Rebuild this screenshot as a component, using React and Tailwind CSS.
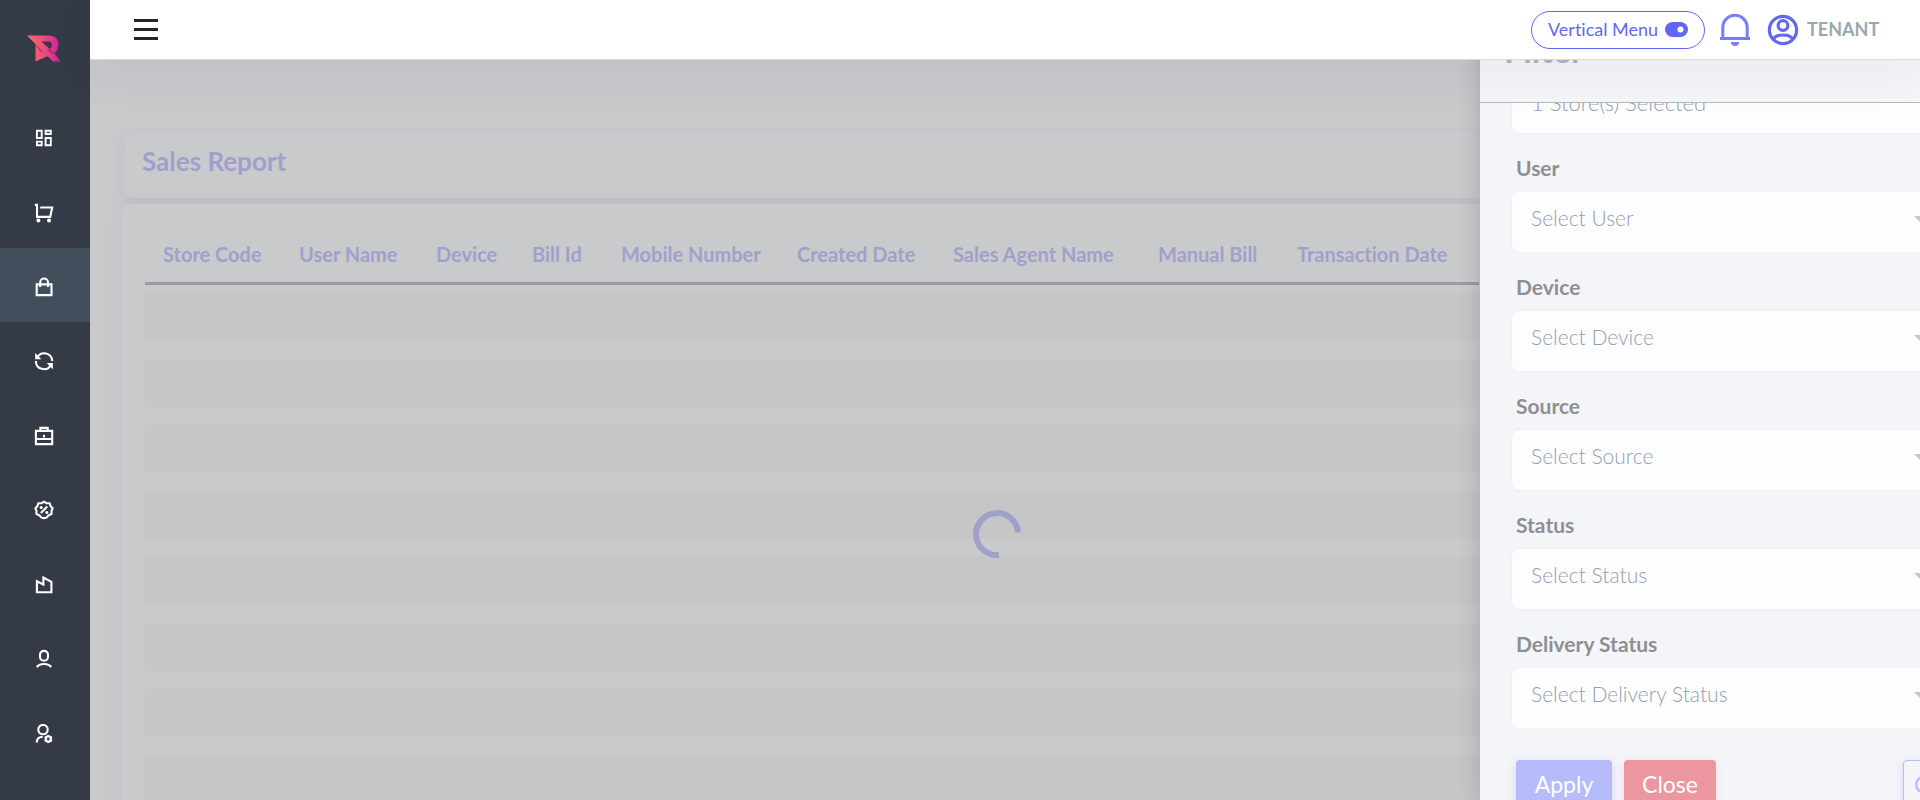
import React from "react";

const Glyph = ({ children }) => (
  <svg viewBox="0 0 20 20" className="size-5" fill="none" stroke="currentColor" strokeWidth="2.1" aria-hidden="true">
    {children}
  </svg>
);

const NAV = [
  { name: "Dashboard", icon: <Glyph><path d="M2.9 2.8h4.8v7.2H2.9zM11.6 2.8h5.2v3.2h-5.2zM2.9 13.6h4.8v3.6H2.9zM11.6 10h5.2v7.2h-5.2z" strokeWidth="1.900" /></Glyph> },
  { name: "Cart", icon: <Glyph><path d="M.8 1.9H3v12h13.2l2-9.4H6.2" /><circle cx="4.4" cy="17.4" r="2" fill="currentColor" stroke="none" /><circle cx="15" cy="17.4" r="2" fill="currentColor" stroke="none" /></Glyph> },
  { name: "Sales", active: true, icon: <Glyph><path d="M2.7 7.4h14.8v10.7H2.7zM6.2 10V5.4a3.9 3.9 0 0 1 7.8 0V10" /></Glyph> },
  { name: "Returns", icon: <Glyph><path d="M3.2 5.400A8 8 0 0 1 18.2 9M1.9 9a8 8 0 0 0 14.900 4.200" /><path d="M1.200 1v6.200h6.200L5.200 5zM18.900 17.200V11h-6.200l2.200 2.200z" fill="currentColor" stroke="none" /></Glyph> },
  { name: "Inventory", icon: <Glyph><path d="M1.9 4.9h16.3v13.2H1.9zM1.9 13h16.3M6.4 4.6V1.9h7.3v2.7" /><path d="M10 8.8v2.6" /></Glyph> },
  { name: "Offers", icon: <Glyph><path d="M10 1.7 12.6 3.3l3-.1 1 2.9 2 2.2L17.5 11l.1 3-2.9 1.2L12.6 17.4 10 18.3 7.4 17.4 5.2 15.2 2.4 14l.1-3L1.4 8.3l2-2.2 1-2.9 3 .1z" strokeLinejoin="round" /><path d="m6.8 13 6.4-6.4" /><circle cx="7.2" cy="7.4" r="1.5" fill="currentColor" stroke="none" /><circle cx="12.8" cy="12.4" r="1.5" fill="currentColor" stroke="none" /></Glyph> },
  { name: "Insights", icon: <Glyph><path d="M2.9 17.2V6.3l6.5 3.2V2.6l8 4.2v10.4z" /></Glyph> },
  { name: "Customers", icon: <Glyph><rect x="6" y="1.9" width="8" height="9.8" rx="3.9" /><path d="M2.9 18.2c2.4-4.2 11.8-4.2 14.2 0" /></Glyph> },
  { name: "User settings", icon: <Glyph><circle cx="9" cy="5.6" r="4.7" /><path d="M2.8 18.600c0-3.700 2.400-5.900 6-5.900" /><circle cx="14.300" cy="15" r="2.600" strokeWidth="2.200" /><path d="M14.300 10.900v8.200M10.700 12.900l7.200 4.200M10.700 17.100l7.200-4.200" strokeWidth="1.800" /><circle cx="14.300" cy="15" r="1.400" fill="#343a46" stroke="none" /></Glyph> },
];

const COLUMNS = [
  { label: "Store Code", width: "w-[136px]" },
  { label: "User Name", width: "w-[137px]" },
  { label: "Device", width: "w-[96px]" },
  { label: "Bill Id", width: "w-[89px]" },
  { label: "Mobile Number", width: "w-[176px]" },
  { label: "Created Date", width: "w-[156px]" },
  { label: "Sales Agent Name", width: "w-[205px]" },
  { label: "Manual Bill", width: "w-[139px]" },
  { label: "Transaction Date", width: "w-[190px]" },
];

const FILTERS = [
  { id: "user", label: "User", value: "Select User" },
  { id: "device", label: "Device", value: "Select Device" },
  { id: "source", label: "Source", value: "Select Source" },
  { id: "status", label: "Status", value: "Select Status" },
  { id: "delivery", label: "Delivery Status", value: "Select Delivery Status" },
];

function Logo() {
  return (
    <svg viewBox="0 0 34 27" className="h-[27px] w-[34px]" aria-label="R">
      <defs>
        <linearGradient id="brand" x1="0" y1="0" x2="1" y2="0">
          <stop offset="0" stopColor="#fb6f6a" />
          <stop offset="0.45" stopColor="#ef4f7c" />
          <stop offset="1" stopColor="#c9219b" />
        </linearGradient>
      </defs>
      <path d="M0 .5h22c6 0 9.500 3.600 9.500 9 0 4-1.600 6.600-4.300 8.500L33.500 26.500h-7.300L20.500 21.200 8.500 26.500V9z" fill="url(#brand)" />
      <path d="M14.500 6.500h7c2.200 0 3.500 1.200 3.500 3.200 0 1.800-.7 3.200-2 4.200z" fill="#343a46" />
      <path d="m6.500 7.500 9 8-1.500 2zM23 13.900l4.200 4.100-1.700 1-5.500-4.500z" fill="#8f2a5c" opacity=".6" />
    </svg>
  );
}

function Sidebar() {
  return (
    <nav className="w-[90px] shrink-0 bg-[#343a46] text-white">
      <a href="#home" className="flex h-[99px] items-center justify-center pb-[2px] pr-[2px]">
        <Logo />
      </a>
      <ul className="flex h-[670px] flex-col">
        {NAV.map((n) => (
          <li key={n.name} className={n.active ? "flex-1 bg-[#434e5d]" : "flex-1"}>
            <a href="#nav" aria-label={n.name} className="flex h-full items-center justify-center pt-1 pr-[2px]">
              {n.icon}
            </a>
          </li>
        ))}
      </ul>
    </nav>
  );
}

function Header() {
  return (
    <header className="relative z-20 flex h-[60px] items-center border-b border-[#dadbdd] bg-white pr-10 pl-11 shadow-[0_10px_50px_rgba(40,45,80,0.06)]">
      <button aria-label="Toggle menu" className="flex w-6 flex-col gap-[6px]">
        <span className="h-[3px] w-full bg-[#22262a]" />
        <span className="h-[3px] w-full bg-[#22262a]" />
        <span className="h-[3px] w-full bg-[#22262a]" />
      </button>
      <div className="ml-auto flex items-center">
        <button className="flex h-[38px] w-[174px] items-center justify-between rounded-full border border-[#6366f1] px-4 text-lg leading-6 text-[#6366f1]">
          <span className="pb-[2px]">Vertical Menu</span>
          <svg viewBox="0 0 23 15" className="h-[15px] w-[23px]" aria-hidden="true">
            <rect width="23" height="15" rx="7.500" fill="#6366f1" />
            <circle cx="15.500" cy="7.500" r="3" fill="#fff" />
          </svg>
        </button>
        <button aria-label="Notifications" className="ml-[15px]">
          <svg viewBox="0 0 30 33" className="h-[33px] w-[30px]" fill="none" stroke="#777df8" strokeWidth="3" aria-hidden="true">
            <path d="M2.800 25V14.500a12.200 12.200 0 0 1 24.400 0V25M0 25.500h30" />
            <path d="M11 29h8a4 4 0 0 1-8 0z" fill="#777df8" stroke="none" />
          </svg>
        </button>
        <button className="ml-[17px] flex items-center gap-2 text-lg font-bold text-[#99a8ae]">
          <svg viewBox="0 0 32 32" className="size-8" fill="none" stroke="#6366f1" strokeWidth="3.200" aria-hidden="true">
            <circle cx="16" cy="16" r="13.600" />
            <circle cx="16" cy="11.500" r="4.900" />
            <path d="M6 25.500c3-6 17-6 20 0" />
          </svg>
          <span className="w-[73px] pb-[2px] text-left">TENANT</span>
        </button>
      </div>
    </header>
  );
}

function Report() {
  return (
    <main className="px-[31px] pt-[72px]">
      <section className="mx-[3px] h-[66px] rounded-[10px] bg-[#c9cacc] px-[18px] shadow-[0_4px_10px_rgba(120,110,200,0.13)]">
        <h1 className="text-[26px] leading-[58px] font-bold text-[#a0a1cb]">Sales Report</h1>
      </section>
      <section className="relative mt-[6px] overflow-hidden rounded-[10px] bg-[#c9cacc] px-6 pt-5 shadow-[0_0_14px_rgba(120,120,200,0.07)]">
        <table className="w-full table-fixed border-separate border-spacing-0 text-left">
          <thead>
            <tr>
              {COLUMNS.map((c) => (
                <th key={c.label} className={`${c.width} h-[61px] border-b-3 border-[#9b9ca2] px-[18px] pt-[2px] pb-0 text-xl leading-6 font-bold whitespace-nowrap text-[#a0a1cb]`}>
                  {c.label}
                </th>
              ))}
              <th className="border-b-3 border-[#9b9ca2]" />
            </tr>
          </thead>
          <tbody>
            {Array.from({ length: 8 }, (_, i) => (
              <tr key={i}>
                <td colSpan={10} className={i === 0 ? "pt-2 pb-[18px]" : "pb-[18px]"}>
                  <div className="h-12 bg-[#c6c6c8]" />
                </td>
              </tr>
            ))}
          </tbody>
        </table>
      </section>
    </main>
  );
}

function Select({ id, label, value, filled }) {
  const text = filled ? "pb-px text-[22px]" : "pb-[9px] text-[21px]";
  return (
    <div className="relative">
      <select id={id} aria-label={label} defaultValue={value} className={`h-[62px] w-full appearance-none rounded-lg border border-[#eff0f3] bg-[#fdfdfe] pr-12 pl-[19px] font-light text-[#929fae] ${text}`}>
        <option>{value}</option>
      </select>
      <svg viewBox="0 0 14 7" className="pointer-events-none absolute top-[25px] right-[14px] h-[7px] w-[14px]" aria-hidden="true">
        <path d="M0 0h14L7 7z" fill="#c6c7c9" />
      </svg>
    </div>
  );
}

function FilterDrawer() {
  return (
    <aside className="absolute inset-y-0 -right-10 z-10 flex w-[481px] flex-col overflow-hidden border-l border-[#b6b8bc] bg-[#f4f5f9] shadow-[0_0_22px_rgba(0,0,0,0.16)]">
      <h2 className="h-[103px] shrink-0 border-b border-[#b4b7bb] px-6 text-[34px] leading-[100px] font-bold text-[#b3b5bb]">Filter</h2>
      <div className="min-h-0 flex-1 overflow-hidden pr-[18px] pl-[31px]">
        <form className="-mt-[31px]">
          <Select id="store" label="Store" value="1 Store(s) Selected" filled />
          {FILTERS.map((f) => (
            <div key={f.id}>
              <label htmlFor={f.id} className="block px-[5px] pt-[19px] pb-2 text-[21px] leading-[30px] font-bold text-[#8e8f93]">{f.label}</label>
              <Select {...f} />
            </div>
          ))}
          <div className="mt-[31px] flex gap-3 pl-[5px] text-[23px]">
            <button type="button" className="h-[50px] w-24 rounded bg-[#b6bbfb] pb-[2px] text-white shadow-[0_2px_10px_rgba(99,102,241,0.2)]">Apply</button>
            <button type="button" className="h-[50px] w-[92px] rounded bg-[#ec979f] pb-[2px] text-white shadow-[0_2px_10px_rgba(236,100,110,0.15)]">Close</button>
            <button type="button" className="ml-auto h-[50px] w-[39px] overflow-hidden rounded border border-[#b6bbfb] pb-[2px] pl-[10px] text-left text-[#b6bbfb] shadow-[0_2px_10px_rgba(99,102,241,0.2)]">Clear</button>
          </div>
        </form>
      </div>
    </aside>
  );
}

export default function App() {
  return (
    <div className="relative flex h-screen overflow-hidden bg-[#c8c9cb] font-['Lato','Open_Sans',sans-serif] [font-variant-ligatures:none]">
      <Sidebar />
      <div className="min-w-0 flex-1">
        <Header />
        <Report />
      </div>
      <FilterDrawer />
      <div role="status" aria-label="Loading" className="pointer-events-none absolute inset-0 flex items-center justify-center pt-[268px] pl-[74px]">
        <svg viewBox="0 0 48 48" className="size-12" fill="none" aria-hidden="true">
          <path d="M45 22.500A21 21 0 1 0 26 45" stroke="#a0a1cb" strokeWidth="6" />
        </svg>
      </div>
    </div>
  );
}
